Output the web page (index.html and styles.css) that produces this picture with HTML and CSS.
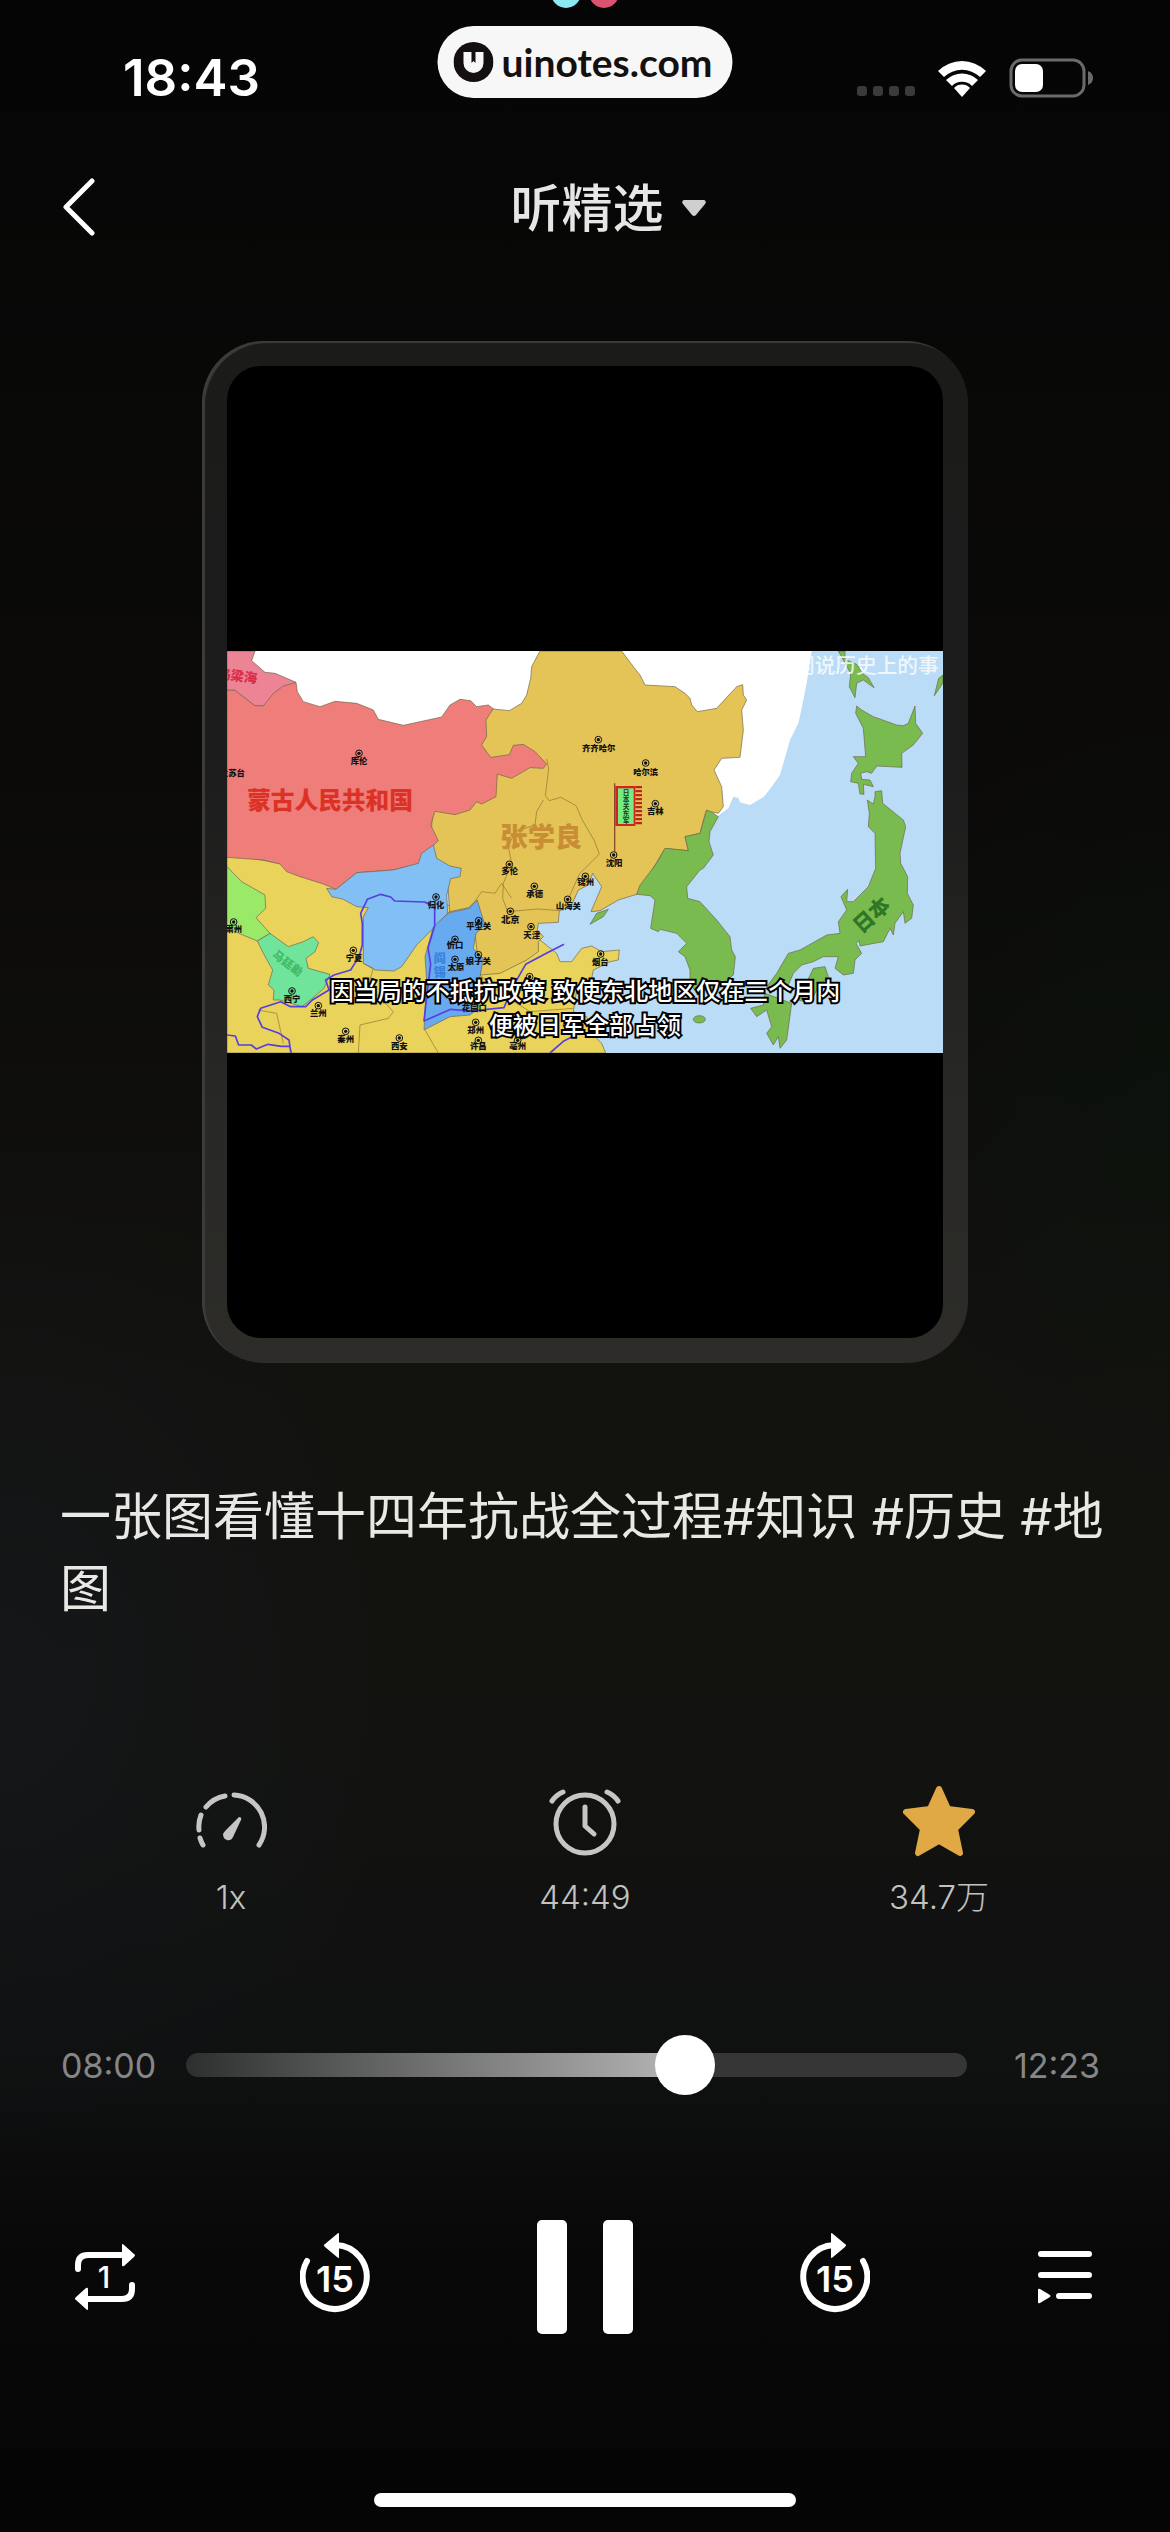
FILE: index.html
```html
<!DOCTYPE html>
<html lang="zh-CN">
<head>
    <meta charset="UTF-8">
    <meta name="viewport" content="width=device-width, initial-scale=1.0">
    <title>听精选</title>
    <link rel="stylesheet" href="styles.css">
</head>
<body>
    <div class="status-bar">
        <span class="status-time">18:43</span>
        <div class="status-icons">
            <div class="signal"><i></i><i></i><i></i><i></i></div>
            <svg class="wifi" viewBox="0 0 50 38">
                <path d="M1 12a34 34 0 0 1 48 0l-6 6a26 26 0 0 0-36 0z"/>
                <path d="M9 21a23 23 0 0 1 32 0l-6 6a14 14 0 0 0-20 0z"/>
                <path d="M17 29a11 11 0 0 1 16 0l-8 9z"/>
            </svg>
            <svg class="battery" viewBox="0 0 84 40">
                <rect x="2" y="2" width="73" height="36" rx="11" fill="none" stroke="#6a6a6a" stroke-width="3"/>
                <rect x="6" y="6" width="28" height="28" rx="7" fill="#fff"/>
                <path d="M79 13q5 2 5 7t-5 7z" fill="#6a6a6a"/>
            </svg>
        </div>
        <div class="island-dots"><i></i><i></i></div>
        <div class="island">
            <svg class="island-logo" viewBox="0 0 40 40">
                <circle cx="20" cy="20" r="20" fill="#141010"/>
                <path d="M10 10h8v11l2-2 2 2V10h8v11a10 10 0 0 1-20 0z" fill="#f7f7f7"/>
            </svg>
            <span>uinotes.com</span>
        </div>
    </div>

    <header class="header">
        <button class="back" aria-label="返回">
            <svg viewBox="0 0 34 58"><path d="M30 3L4 29l26 26"/></svg>
        </button>
        <button class="channel">听精选
            <svg viewBox="0 0 24 16"><path d="M2 0h20q3 1 1 4L14 15q-2 2-4 0L1 4q-2-3 1-4z"/></svg>
        </button>
    </header>

    <main>
        <div class="frame">
            <figure class="cover">
                <svg class="map" viewBox="21 33 2148 1206">
                    <defs>
                        <g id="city">
                            <circle r="10" fill="none" stroke="#111" stroke-width="3"/>
                            <circle r="5" fill="#111"/>
                        </g>
                    </defs>
                    <rect x="21" y="33" width="2148" height="1206" fill="#badcf6"/>
                    <path fill="#fff" d="M21 33H1775L1760 130 1745 205 1735 250 1710 300 1680 405 1655 440 1632 470 1590 495 1560 487 1555 474 1540 470 1525 505 1490 530H60z"/>
                    <g stroke="#6d6448" stroke-width="2" stroke-linejoin="round">
                        <path fill="#e9d35b" d="M21 640L330 700 700 800 960 900 1010 940 1020 965 1055 965 1085 925 1115 918 1145 935 1198 930 1195 960 1170 965 1120 990 1115 1015 1070 1050 1060 1115 1100 1130 1120 1185 1145 1210 1157 1239H21z"/>
                        <path fill="#e4c456" d="M960 33L935 80 932 115 920 165 905 190 868 212 800 205 640 480 630 640 680 680 690 830 760 840 780 1005 840 1000 920 960 955 935 955 905 970 890 952 870 955 850 1015 847 1018 812 1055 795 1075 750 1105 735 1118 700 1145 740 1113 815 1140 812 1195 780 1250 763 1290 700 1335 625 1405 632 1395 590 1440 580 1458 512 1495 520 1510 500 1505 440 1482 390 1505 355 1560 352 1570 270 1565 210 1580 180 1570 165 1568 134 1550 140 1490 205 1432 215 1415 195 1410 175 1395 160 1365 140 1275 135 1260 105 1240 80 1205 33z"/>
                        <path fill="#ec8496" d="M21 33H105L95 62 135 97 165 100 228 127 190 155 135 198H105L45 151 21 150z"/>
                        <path fill="#ef7d7a" d="M21 151L45 151 105 197 130 198 160 160 190 138 228 127 232 155 250 185 300 200 345 184 410 190 460 210 475 238 550 256 665 231 690 195 720 178 752 182 770 200 805 195 820 206 798 240 800 290 785 315 812 352 868 344 880 316 910 313 945 335 980 372 970 385 930 383 875 415 832 402 828 470 785 492 770 485 750 510 705 524 645 514 632 555 655 602 605 650 600 670 520 690 410 698 348 748 310 732 240 710 200 695 180 672 130 660 21 652z"/>
                        <path fill="#82bff4" d="M320 745L348 748 410 698 520 690 595 670 605 640 640 615 650 655 690 678 724 685 720 710 692 716 680 765 683 820 645 860 590 915 545 980 522 993 465 990 430 970 430 830 445 803 410 800 370 778 335 770z"/>
                        <path fill="#68aaf0" d="M640 860L690 815 745 803 772 780 782 815 795 855 768 880 760 925 790 955 780 1010 790 1060 770 1110 750 1125 690 1130 612 1170 620 1020 615 950z"/>
                        <path fill="#9be968" d="M21 680L65 725 135 765 137 805 108 833 150 880 112 903 21 865z"/>
                        <path fill="#70e49a" d="M112 903L150 880 205 920 250 905 280 890 296 908 285 935 258 955 265 985 330 1003 312 1045 265 1085 245 1100 180 1080 160 1080 162 1050 145 1035 158 990 130 940z"/>
                        <path fill="#7abb50" d="M1460 510L1478 518 1495 530 1470 575 1467 605 1480 645 1450 685 1440 690 1400 740 1403 775 1440 785 1490 840 1530 890 1535 930 1546 950 1540 1005 1490 1040 1430 1060 1410 1030 1410 990 1395 950 1375 935 1400 910 1370 880 1320 868 1315 875 1292 865 1305 780 1290 767 1250 763 1260 735 1310 670 1335 625 1405 632 1395 590 1440 580z"/>
                        <path fill="#7abb50" d="M1110 853L1130 820 1165 808 1150 830z"/>
                        <g transform="translate(1080 0)" fill="#7abb50">
                            <path d="M775 33h20v25l35 15 20 30 15 10 17 30-32-23-20 10-5 43-17-33 4-40z"/>
                            <path d="M1089 105l-13 10-13 52 26-38z"/>
                            <path d="M830 198L845 210 880 230 950 255 970 257 985 250 1005 198 1007 250 1028 280 1000 315 965 340 966 382 890 378 875 400 860 395 842 400 845 418 870 420 880 440 850 433 852 463 840 462 835 430 812 425 815 400 835 370 820 350 857 350 850 265 827 220z"/>
                            <path d="M885 470V455L905 452 908 490 970 540 977 560 960 640 962 670 983 710 982 760 1000 795 995 835 975 850 970 815 945 850 940 885 930 865 910 905 840 918 838 902 828 910 845 940 825 960 820 1000 790 1005 765 985 775 950 730 950 700 965 665 975 640 1000 625 1035 560 1040 590 1000 625 940 660 930 740 885 780 880 775 845 800 810 783 770 803 748 800 785 820 785 865 740 887 685 885 580 865 560 868 520 862 480 880 492z"/>
                            <path d="M512 1105L550 1095 555 1060 635 1090 620 1200 600 1225 595 1190 580 1215 560 1180 575 1160 560 1110 530 1130z"/>
                            <path d="M700 985L735 980 745 1010 715 1040 690 1090 655 1080z"/>
                            <ellipse cx="358" cy="1138" rx="18" ry="11"/>
                        </g>
                    </g>
                    <g fill="none" stroke="#8d7430" stroke-width="2">
                        <path d="M980 357l6 30-10 80 12 15 35-10 45 25 20 45 35 60 15 40-60 60-35 80-20 30-70-5-90 8-15-40 2-45 25-60-10-50 20-45 60-20 5-40 20-35"/>
                        <path d="M680 820l70-15 35-50 40 5 20-30 30 45M430 970l30 15-15 50 75 80-15 20-85 20-5 84M615 1170l40 69M115 1110l55 10 20 90M780 1005l70 60 80 50 130-10"/>
                    </g>
                    <g fill="none" stroke="#5540df" stroke-width="5" stroke-linejoin="round">
                        <path d="M21 1185l25 3 10 27h38l15 12 35-14 40 6 25 0 5 20M212 1235l-5-35-30-20-50-18-15-32 10-25 60-20 30 15h45l20-20 50-30-10-30 25-15 50-15 25-40 10-35v-65l-5-30 20-42 40-15 30 8 12 12 90 3 30 15v57l-20 65 8 50-10 80-10 90 80-35 60 5 100-10 25-60 40-70 65-35 50-25M990 1239l40-35 30-15"/>
                    </g>
                    <!-- city marks -->
                    <use href="#city" x="417" y="340"/><use href="#city" x="868" y="673"/>
                    <use href="#city" x="943" y="739"/><use href="#city" x="1043" y="778"/>
                    <use href="#city" x="1096" y="709"/><use href="#city" x="871" y="814"/>
                    <use href="#city" x="933" y="860"/><use href="#city" x="648" y="771"/>
                    <use href="#city" x="776" y="842"/><use href="#city" x="705" y="898"/>
                    <use href="#city" x="705" y="958"/><use href="#city" x="775" y="944"/>
                    <use href="#city" x="41" y="846"/><use href="#city" x="400" y="931"/>
                    <use href="#city" x="216" y="1053"/><use href="#city" x="295" y="1097"/>
                    <use href="#city" x="377" y="1174"/><use href="#city" x="538" y="1194"/>
                    <use href="#city" x="767" y="1147"/><use href="#city" x="775" y="1201"/>
                    <use href="#city" x="893" y="1201"/><use href="#city" x="1135" y="299"/>
                    <use href="#city" x="1277" y="369"/><use href="#city" x="1306" y="491"/>
                    <use href="#city" x="1181" y="645"/><use href="#city" x="1142" y="942"/>
                    <use href="#city" x="929" y="1010"/>
                    <g class="city-names">
                        <text x="417" y="373">库伦</text><text x="37" y="409">兰苏台</text>
                        <text x="869" y="702">多伦</text><text x="944" y="772">承德</text>
                        <text x="1045" y="808">山海关</text><text x="1097" y="734">锦州</text>
                        <text class="big" x="871" y="849">北京</text><text x="935" y="894">天津</text>
                        <text x="648" y="805">归化</text><text x="776" y="868">平型关</text>
                        <text x="705" y="923">忻口</text><text x="708" y="989">太原</text>
                        <text x="775" y="971">娘子关</text><text x="41" y="877">肃州</text>
                        <text x="402" y="963">宁夏</text><text x="216" y="1087">西宁</text>
                        <text x="295" y="1128">兰州</text><text x="377" y="1206">秦州</text>
                        <text x="538" y="1227">西安</text><text x="763" y="1113">花园口</text>
                        <text x="767" y="1178">郑州</text><text x="775" y="1228">许昌</text>
                        <text x="893" y="1228">亳州</text><text x="1136" y="332">齐齐哈尔</text>
                        <text x="1277" y="404">哈尔滨</text><text x="1306" y="521">吉林</text>
                        <text x="1182" y="678">沈阳</text><text x="1141" y="974">烟台</text>
                    </g>
                    <!-- flag of the Kwantung army -->
                    <path d="M1184 430V635" stroke="#8b4a2a" stroke-width="4"/>
                    <rect x="1186" y="438" width="60" height="120" fill="#d3231c"/>
                    <path d="M1256 438V558" stroke="#b32a1c" stroke-width="20" stroke-dasharray="7 5"/>
                    <rect x="1194" y="445" width="47" height="107" fill="#77ea80"/>
                    <g class="flag-text">
                        <text x="1218" y="464">日</text><text x="1218" y="485">本</text>
                        <text x="1218" y="506">关</text><text x="1218" y="527">东</text>
                        <text x="1218" y="548">军</text>
                    </g>
                    <g class="regions">
                        <text x="330" y="508" font-size="71" fill="#dc3226">蒙古人民共和国</text>
                        <text x="964" y="622" font-size="82" fill="#c98e35">张学良</text>
                        <text x="52" y="122" font-size="40" fill="#d92f4b" transform="rotate(8 52 108)">乌梁海</text>
                        <text x="203" y="982" font-size="34" fill="#43ba69" transform="rotate(38 203 970)">马廷勷</text>
                        <text x="659" y="968" font-size="36" fill="#387fdc">阎</text>
                        <text x="659" y="1012" font-size="36" fill="#387fdc">锡</text>
                        <text x="1955" y="847" font-size="62" fill="#2f7726" transform="rotate(-42 1955 825)">日本</text>
                    </g>
                    <text class="watermark" x="2156" y="98">闲说历史上的事</text>
                </svg>
                <figcaption class="subtitle">因当局的不抵抗政策 致使东北地区仅在三个月内<br>便被日军全部占领</figcaption>
            </figure>
        </div>

        <p class="title">一张图看懂十四年抗战全过程#知识 #历史 #地图</p>

        <div class="actions">
            <button>
                <svg viewBox="0 0 72 72" class="line-icon">
                    <path d="M39 10A32 32 0 0 1 64 60M30 11A32 32 0 0 0 11 22M6 30A32 32 0 0 0 4 45M5 53A32 32 0 0 0 8 60"/>
                    <path class="solid" d="M44 32q3 0 2 3L38 52q-2 4-6 3t-4-6q1-2 3-4z"/>
                </svg>
                <span>1x</span>
            </button>
            <button>
                <svg viewBox="0 0 72 72" class="line-icon">
                    <circle cx="36" cy="39" r="29"/>
                    <path d="M36 22v19l9 8M3 16Q7 10 14 7M69 16Q65 10 58 7"/>
                </svg>
                <span>44:49</span>
            </button>
            <button>
                <svg viewBox="0 0 72 72" class="star">
                    <path d="M36 4l9 20 24 3-17 17 5 24-21-12-21 12 5-24L3 27l24-3z"/>
                </svg>
                <span>34.7万</span>
            </button>
        </div>

        <div class="progress">
            <span>08:00</span>
            <input type="range" min="0" max="743" value="483" aria-label="播放进度">
            <span>12:23</span>
        </div>

        <div class="controls">
            <button aria-label="单曲循环">
                <svg width="60" height="66" viewBox="0 0 60 66">
                    <path class="stroke" d="M3 25v-4q0-10 10-10h36M57 41v4q0 10-10 10H11"/>
                    <path d="M47 1q0-2 2 0l10 9q2 1 0 3l-10 9q-2 1-2-1zM13 65q0 2-2 0L1 56q-2-1 0-3l10-9q2-1 2 1z"/>
                    <text x="29" y="44" font-size="30" font-weight="500">1</text>
                </svg>
            </button>
            <button aria-label="后退15秒">
                <svg width="70" height="88" viewBox="0 0 70 88">
                    <path class="stroke" d="M7 28A32 32 0 1 0 36 12"/>
                    <path d="M39 1v23q0 2-2 0L25 14q-2-2 0-3L37 1q2-2 2 0z"/>
                    <text x="35" y="59" font-size="36" font-weight="600">15</text>
                </svg>
            </button>
            <button class="pause" aria-label="暂停">
                <svg width="96" height="114" viewBox="0 0 96 114">
                    <rect width="30" height="114" rx="5"/>
                    <rect x="66" width="30" height="114" rx="5"/>
                </svg>
            </button>
            <button aria-label="前进15秒">
                <svg width="70" height="88" viewBox="0 0 70 88">
                    <path class="stroke" d="M63 28A32 32 0 1 1 34 12"/>
                    <path d="M31 1v23q0 2 2 0l12-10q2-2 0-3L33 1q-2-2-2 0z"/>
                    <text x="35" y="59" font-size="36" font-weight="600">15</text>
                </svg>
            </button>
            <button aria-label="播放列表">
                <svg width="54" height="54" viewBox="0 0 54 54">
                    <path class="stroke" d="M3 4h48M3 25h48M21 46h30"/>
                    <path d="M0 40q0-2 2-1l10 6q1 1 0 2l-10 6q-2 1-2-1z"/>
                </svg>
            </button>
        </div>
    </main>

    <div class="home-indicator"></div>
</body>
</html>
```

FILE: styles.css
```css
* {
    box-sizing: border-box;
}
body {
    margin: 0;
    min-height: 100vh;
    display: flex;
    flex-direction: column;
    position: relative;
    font-family: Inter, "Noto Sans CJK SC", sans-serif;
    color: #fff;
    background:
        radial-gradient(ellipse 400px 500px at 0 66%, rgba(24, 28, 38, 0.4), transparent),
        radial-gradient(ellipse 300px 400px at 100% 43%, rgba(8, 22, 12, 0.4), transparent),
        linear-gradient(#050506, #080807 14%, #0b0a09 30%, #12120f 55%, #121310 70%, #0f1010 82%, #080808 89%, #050505);
}
button {
    padding: 0;
    border: none;
    background: none;
    color: inherit;
    font: inherit;
    cursor: pointer;
}

/* status bar */
.status-bar {
    display: flex;
    justify-content: space-between;
    align-items: center;
    height: 130px;
    padding: 25px 77px 0 123px;
}
.status-time {
    font-size: 51px;
    font-weight: 600;
}
.status-icons {
    display: flex;
    align-items: center;
    gap: 22px;
}
.signal {
    display: flex;
    gap: 6px;
    padding-top: 26px;
}
.signal i {
    width: 10px;
    height: 10px;
    border-radius: 3px;
    background-color: #3a3a3a;
}
.wifi {
    width: 50px;
    height: 38px;
    fill: #fff;
}
.battery {
    width: 84px;
    height: 40px;
}
.island {
    position: absolute;
    top: 26px;
    left: 50%;
    transform: translateX(-50%);
    display: flex;
    align-items: center;
    gap: 8px;
    height: 72px;
    padding: 0 20px 0 16px;
    border-radius: 36px;
    background-color: #f7f7f7;
    color: #141010;
    font-family: Lato, sans-serif;
    font-size: 39px;
    font-weight: 700;
}
.island-logo {
    width: 40px;
    height: 40px;
}
.island-dots {
    position: absolute;
    top: -22px;
    left: 50%;
    transform: translateX(-50%);
    display: flex;
    gap: 8px;
}
.island-dots i {
    width: 30px;
    height: 30px;
    border-radius: 50%;
    background-color: #8ce8f3;
}
.island-dots i:last-child {
    background-color: #dc5270;
}

/* header */
.header {
    display: grid;
    grid-template-columns: 100px 1fr 100px;
    align-items: center;
    height: 154px;
}
.back {
    padding-left: 62px;
    text-align: left;
}
.back svg {
    display: block;
    width: 34px;
    height: 58px;
    fill: none;
    stroke: #fff;
    stroke-width: 5;
    stroke-linecap: round;
    stroke-linejoin: round;
}
.channel {
    display: flex;
    justify-content: center;
    align-items: center;
    gap: 18px;
    padding: 0 0 4px 46px;
    font-size: 51px;
    font-weight: 500;
    color: #e6e6e6;
}
.channel svg {
    width: 24px;
    height: 16px;
    margin-top: 6px;
    fill: #cfcfcf;
}

/* cover */
.frame {
    margin: 57px 202px 0;
    padding: 25px;
    border-radius: 62px;
    background: linear-gradient(#1b1b1a, #1d1c1c 40%, #282826 75%, #2d2c29);
    box-shadow: inset 3px 2px 1px #3c3c3b;
}
.cover {
    position: relative;
    display: flex;
    align-items: center;
    aspect-ratio: 716 / 972;
    margin: 0;
    border-radius: 34px;
    background-color: #000;
    overflow: hidden;
}
.map {
    width: 100%;
}
.map text {
    font-family: "Noto Sans CJK SC", sans-serif;
    font-weight: 700;
    text-anchor: middle;
}
.map .city-names text {
    font-size: 25px;
    font-weight: 900;
    fill: #111;
}
.map .city-names .big {
    font-size: 28px;
}
.map .regions text {
    font-weight: 900;
}
.flag-text {
    font-size: 20px;
    fill: #123d18;
}
.map .watermark {
    font-size: 62px;
    font-weight: 500;
    text-anchor: end;
    fill: #fff;
    fill-opacity: 0.8;
}
/* captions lie over the lower part of the map */
.subtitle {
    position: absolute;
    left: 0;
    right: 0;
    bottom: 295px;
    font-size: 24px;
    font-weight: 500;
    line-height: 34px;
    text-align: center;
    -webkit-text-stroke: 4px #000;
    paint-order: stroke fill;
}

.title {
    margin: 118px 60px 0;
    font-size: 51px;
    font-weight: 400;
    line-height: 72px;
    color: #e8e8e5;
}

/* speed, timer, favourite */
.actions {
    display: grid;
    grid-template-columns: repeat(3, 1fr);
    margin: 160px 54px 0;
}
.actions button {
    display: flex;
    flex-direction: column;
    align-items: center;
    gap: 20px;
    font-size: 33px;
    font-weight: 300;
    line-height: 40px;
    color: #c2c2c0;
}
.actions svg {
    width: 72px;
    height: 72px;
}
.line-icon {
    fill: none;
    stroke: #c6c6c4;
    stroke-width: 5;
    stroke-linecap: round;
    stroke-linejoin: round;
}
.line-icon .solid {
    fill: #c6c6c4;
    stroke: none;
}
.star {
    fill: #e1a945;
    stroke: #e1a945;
    stroke-width: 6;
    stroke-linejoin: round;
}

/* progress */
.progress {
    display: grid;
    grid-template-columns: 94px 1fr 102px;
    column-gap: 31px;
    align-items: center;
    height: 60px;
    margin: 118px 70px 0 61px;
    font-size: 34px;
    color: #868686;
}
.progress span:last-child {
    text-align: right;
}
.progress input {
    -webkit-appearance: none;
    appearance: none;
    width: 100%;
    height: 60px;
    margin: 0;
    background: none;
}
.progress input::-webkit-slider-runnable-track {
    height: 24px;
    border-radius: 12px;
    background: linear-gradient(90deg, #2d2f2e, #b2b2b2 62%, #363636 62%);
}
.progress input::-webkit-slider-thumb {
    -webkit-appearance: none;
    width: 60px;
    height: 60px;
    margin-top: -18px;
    border-radius: 50%;
    background-color: #fff;
}

/* player controls */
.controls {
    display: flex;
    justify-content: space-between;
    margin: 122px 65px 0;
}
.controls button {
    display: flex;
    justify-content: center;
    align-items: center;
    width: 80px;
    height: 120px;
}
.controls .pause {
    width: 120px;
}
.controls svg {
    fill: #fff;
}
.controls text {
    text-anchor: middle;
}
.controls .stroke {
    fill: none;
    stroke: #fff;
    stroke-width: 6;
    stroke-linecap: round;
}

.home-indicator {
    width: 36%;
    height: 14px;
    margin: auto auto 25px;
    border-radius: 7px;
    background-color: #fff;
}
```
